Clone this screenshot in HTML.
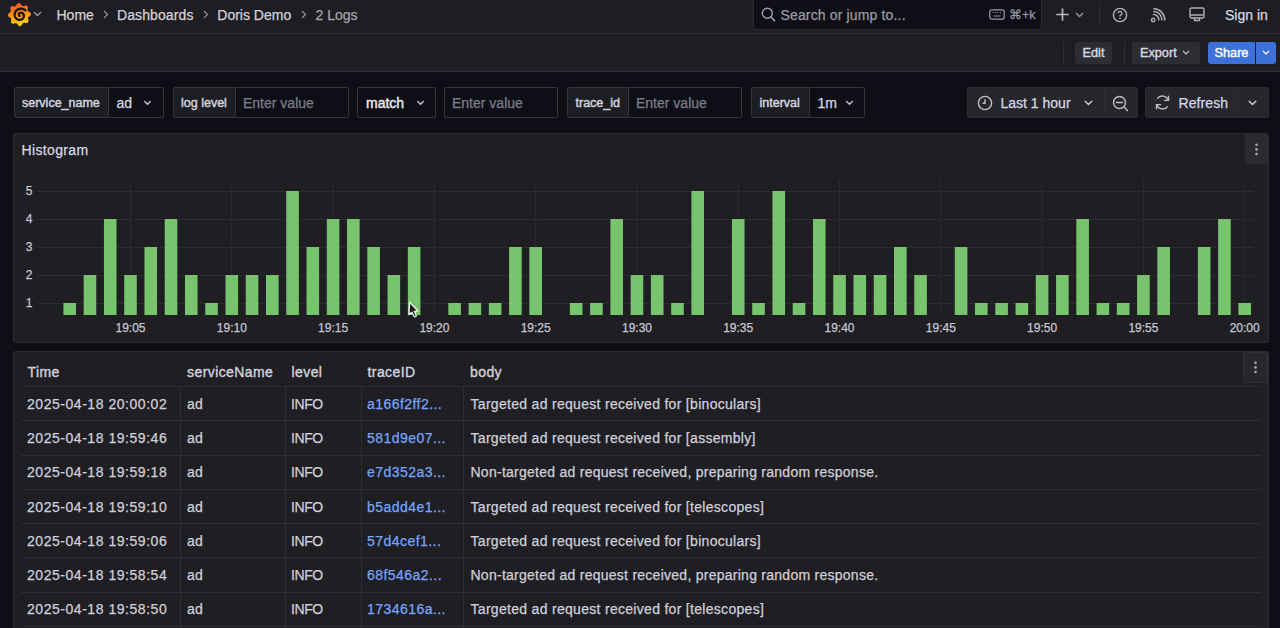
<!DOCTYPE html>
<html><head><meta charset="utf-8">
<style>
*{box-sizing:border-box;margin:0;padding:0}
html,body{width:1280px;height:628px;overflow:hidden;background:#0e0f16;font-family:"Liberation Sans",sans-serif;color:#ccccdc}
div,span{-webkit-text-stroke:0.25px currentColor}
.a{position:absolute;white-space:nowrap}
#top{position:absolute;left:0;top:0;width:1280px;height:34px;background:#1d1d22;border-bottom:1px solid #2e2f35}
#tool{position:absolute;left:0;top:34px;width:1280px;height:38px;background:#1d1d22;border-bottom:1px solid #2e2f35}
.t14{font-size:14px;line-height:16px}
.bc{color:#d2d2dc;font-size:14px;line-height:16px;top:7px}
.btn{position:absolute;top:42px;height:22px;background:#2c2d33;border-radius:3px;font-size:12.7px;line-height:22px;color:#d8d8e2;-webkit-text-stroke:0.4px currentColor}
.lab{position:absolute;top:87px;height:31px;background:#1d1e24;border:1px solid #34353b;border-radius:2px 0 0 2px;font-size:12.5px;font-weight:400;line-height:30px;color:#d4d4de;-webkit-text-stroke:0.45px currentColor}
.inp{position:absolute;top:87px;height:31px;background:#0e0f16;border:1px solid #34353b;border-radius:2px;font-size:14px;line-height:30px;color:#d8d8e2}
.ph{color:#7d7d88}
.panel{position:absolute;left:13px;width:1256px;background:#1e1e23;border:1px solid #2d2e33;border-radius:3px}
.tbtn{position:absolute;top:87px;height:31px;background:#26272d;border:1px solid #2c2d33;border-radius:2px}
.row{left:21px;width:1240px;height:1px;background:#2d2e33}
.vl{top:386px;width:1px;height:260px;background:#2d2e33}
.td{font-size:14px;line-height:16px;color:#d0d0da;letter-spacing:0.29px}
.dt{letter-spacing:0.54px}
.caps{letter-spacing:-0.4px}
.lk{color:#7aa5f5;letter-spacing:0.45px}
.th{font-size:14px;line-height:16px;color:#d0d0da;top:364px;letter-spacing:0.42px;-webkit-text-stroke:0.4px currentColor}
</style></head><body>
<div id="top"></div>
<div id="tool"></div>

<!-- logo -->
<svg class="a" style="left:7px;top:2px" width="25" height="25" viewBox="0 0 25 25">
 <defs><linearGradient id="lg" x1="0" y1="0" x2="0.15" y2="1"><stop offset="0" stop-color="#ee4b2b"/><stop offset="1" stop-color="#fbd20a"/></linearGradient></defs>
 <path d="M23.91 12.60 L23.82 12.82 L23.70 13.04 L23.55 13.26 L23.39 13.46 L23.20 13.66 L23.00 13.85 L22.79 14.04 L22.57 14.21 L22.35 14.38 L22.14 14.54 L21.94 14.69 L21.75 14.84 L21.57 14.99 L21.42 15.14 L21.29 15.30 L21.18 15.45 L21.10 15.62 L21.04 15.79 L21.00 15.97 L20.99 16.16 L21.00 16.36 L21.02 16.57 L21.06 16.80 L21.11 17.04 L21.17 17.29 L21.24 17.55 L21.30 17.82 L21.36 18.09 L21.40 18.36 L21.44 18.64 L21.45 18.91 L21.45 19.17 L21.42 19.43 L21.37 19.67 L21.30 19.90 L21.20 20.11 L21.07 20.30 L20.91 20.47 L20.74 20.62 L20.54 20.74 L20.31 20.83 L20.08 20.90 L19.82 20.95 L19.56 20.98 L19.28 20.99 L19.01 20.98 L18.73 20.96 L18.45 20.93 L18.18 20.90 L17.92 20.86 L17.66 20.82 L17.42 20.80 L17.19 20.78 L16.98 20.78 L16.78 20.79 L16.59 20.83 L16.42 20.88 L16.25 20.96 L16.10 21.06 L15.96 21.19 L15.82 21.34 L15.69 21.51 L15.55 21.70 L15.42 21.90 L15.29 22.12 L15.15 22.35 L15.00 22.58 L14.85 22.81 L14.69 23.04 L14.52 23.26 L14.34 23.46 L14.15 23.65 L13.95 23.81 L13.74 23.95 L13.53 24.06 L13.31 24.13 L13.08 24.18 L12.86 24.19 L12.63 24.16 L12.40 24.11 L12.18 24.02 L11.96 23.90 L11.74 23.75 L11.54 23.59 L11.34 23.40 L11.15 23.20 L10.96 22.99 L10.79 22.77 L10.62 22.55 L10.46 22.34 L10.31 22.14 L10.16 21.95 L10.01 21.77 L9.86 21.62 L9.70 21.49 L9.55 21.38 L9.38 21.30 L9.21 21.24 L9.03 21.20 L8.84 21.19 L8.64 21.20 L8.43 21.22 L8.20 21.26 L7.96 21.31 L7.71 21.37 L7.45 21.44 L7.18 21.50 L6.91 21.56 L6.64 21.60 L6.36 21.64 L6.09 21.65 L5.83 21.65 L5.57 21.62 L5.33 21.57 L5.10 21.50 L4.89 21.40 L4.70 21.27 L4.53 21.11 L4.38 20.94 L4.26 20.74 L4.17 20.51 L4.10 20.28 L4.05 20.02 L4.02 19.76 L4.01 19.48 L4.02 19.21 L4.04 18.93 L4.07 18.65 L4.10 18.38 L4.14 18.12 L4.18 17.86 L4.20 17.62 L4.22 17.39 L4.22 17.18 L4.21 16.98 L4.17 16.79 L4.12 16.62 L4.04 16.45 L3.94 16.30 L3.81 16.16 L3.66 16.02 L3.49 15.89 L3.30 15.75 L3.10 15.62 L2.88 15.49 L2.65 15.35 L2.42 15.20 L2.19 15.05 L1.96 14.89 L1.74 14.72 L1.54 14.54 L1.35 14.35 L1.19 14.15 L1.05 13.94 L0.94 13.73 L0.87 13.51 L0.82 13.28 L0.81 13.06 L0.84 12.83 L0.89 12.60 L0.98 12.38 L1.10 12.16 L1.25 11.94 L1.41 11.74 L1.60 11.54 L1.80 11.35 L2.01 11.16 L2.23 10.99 L2.45 10.82 L2.66 10.66 L2.86 10.51 L3.05 10.36 L3.23 10.21 L3.38 10.06 L3.51 9.90 L3.62 9.75 L3.70 9.58 L3.76 9.41 L3.80 9.23 L3.81 9.04 L3.80 8.84 L3.78 8.63 L3.74 8.40 L3.69 8.16 L3.63 7.91 L3.56 7.65 L3.50 7.38 L3.44 7.11 L3.40 6.84 L3.36 6.56 L3.35 6.29 L3.35 6.03 L3.38 5.77 L3.43 5.53 L3.50 5.30 L3.60 5.09 L3.73 4.90 L3.89 4.73 L4.06 4.58 L4.26 4.46 L4.49 4.37 L4.72 4.30 L4.98 4.25 L5.24 4.22 L5.52 4.21 L5.79 4.22 L6.07 4.24 L6.35 4.27 L6.62 4.30 L6.88 4.34 L7.14 4.38 L7.38 4.40 L7.61 4.42 L7.82 4.42 L8.02 4.41 L8.21 4.37 L8.38 4.32 L8.55 4.24 L8.70 4.14 L8.84 4.01 L8.98 3.86 L9.11 3.69 L9.25 3.50 L9.38 3.30 L9.51 3.08 L9.65 2.85 L9.80 2.62 L9.95 2.39 L10.11 2.16 L10.28 1.94 L10.46 1.74 L10.65 1.55 L10.85 1.39 L11.06 1.25 L11.27 1.14 L11.49 1.07 L11.72 1.02 L11.94 1.01 L12.17 1.04 L12.40 1.09 L12.62 1.18 L12.84 1.30 L13.06 1.45 L13.26 1.61 L13.46 1.80 L13.65 2.00 L13.84 2.21 L14.01 2.43 L14.18 2.65 L14.34 2.86 L14.49 3.06 L14.64 3.25 L14.79 3.43 L14.94 3.58 L15.10 3.71 L15.25 3.82 L15.42 3.90 L15.59 3.96 L15.77 4.00 L15.96 4.01 L16.16 4.00 L16.37 3.98 L16.60 3.94 L16.84 3.89 L17.09 3.83 L17.35 3.76 L17.62 3.70 L17.89 3.64 L18.16 3.60 L18.44 3.56 L18.71 3.55 L18.97 3.55 L19.23 3.58 L19.47 3.63 L19.70 3.70 L19.91 3.80 L20.10 3.93 L20.27 4.09 L20.42 4.26 L20.54 4.46 L20.63 4.69 L20.70 4.92 L20.75 5.18 L20.78 5.44 L20.79 5.72 L20.78 5.99 L20.76 6.27 L20.73 6.55 L20.70 6.82 L20.66 7.08 L20.62 7.34 L20.60 7.58 L20.58 7.81 L20.58 8.02 L20.59 8.22 L20.63 8.41 L20.68 8.58 L20.76 8.75 L20.86 8.90 L20.99 9.04 L21.14 9.18 L21.31 9.31 L21.50 9.45 L21.70 9.58 L21.92 9.71 L22.15 9.85 L22.38 10.00 L22.61 10.15 L22.84 10.31 L23.06 10.48 L23.26 10.66 L23.45 10.85 L23.61 11.05 L23.75 11.26 L23.86 11.47 L23.93 11.69 L23.98 11.92 L23.99 12.14 L23.96 12.37Z" fill="url(#lg)"/>
 <path d="M12.66 13.93 L12.59 13.92 L12.52 13.90 L12.45 13.87 L12.38 13.84 L12.31 13.80 L12.24 13.75 L12.18 13.70 L12.12 13.64 L12.06 13.57 L12.00 13.50 L11.95 13.42 L11.90 13.34 L11.86 13.25 L11.83 13.16 L11.80 13.06 L11.78 12.95 L11.76 12.85 L11.76 12.74 L11.76 12.62 L11.76 12.51 L11.78 12.39 L11.81 12.28 L11.84 12.16 L11.89 12.04 L11.94 11.93 L12.00 11.81 L12.07 11.70 L12.15 11.59 L12.24 11.49 L12.34 11.39 L12.44 11.29 L12.56 11.21 L12.68 11.12 L12.81 11.05 L12.94 10.98 L13.08 10.92 L13.23 10.87 L13.39 10.83 L13.55 10.80 L13.71 10.78 L13.88 10.77 L14.05 10.77 L14.22 10.78 L14.39 10.81 L14.56 10.85 L14.74 10.89 L14.91 10.95 L15.08 11.03 L15.24 11.11 L15.41 11.21 L15.56 11.32 L15.72 11.44 L15.86 11.57 L16.00 11.72 L16.13 11.87 L16.26 12.03 L16.37 12.21 L16.47 12.39 L16.56 12.58 L16.64 12.78 L16.71 12.99 L16.76 13.20 L16.80 13.42 L16.83 13.65 L16.84 13.87 L16.84 14.10 L16.82 14.34 L16.79 14.57 L16.74 14.80 L16.67 15.03 L16.59 15.26 L16.50 15.49 L16.39 15.71 L16.26 15.93 L16.12 16.14 L15.96 16.34 L15.79 16.54 L15.61 16.72 L15.41 16.89 L15.20 17.06 L14.97 17.21 L14.74 17.34 L14.49 17.46 L14.24 17.57 L13.97 17.66 L13.70 17.74 L13.42 17.79 L13.14 17.83 L12.85 17.86 L12.56 17.86 L12.27 17.85 L11.97 17.81 L11.68 17.76 L11.38 17.68 L11.09 17.59 L10.81 17.48 L10.53 17.35 L10.25 17.20 L9.98 17.03 L9.73 16.85 L9.48 16.64 L9.25 16.42 L9.02 16.18 L8.82 15.93 L8.62 15.66 L8.45 15.38 L8.29 15.08 L8.14 14.78 L8.02 14.46 L7.92 14.13 L7.83 13.80 L7.77 13.45 L7.73 13.10 L7.71 12.75 L7.72 12.39 L7.75 12.04 L7.80 11.68 L7.87 11.32 L7.97 10.97 L8.09 10.62 L8.23 10.28 L8.40 9.94 L8.59 9.61 L8.80 9.30 L9.03 8.99 L9.28 8.70 L9.55 8.43 L9.84 8.17 L10.15 7.92 L10.47 7.70 L10.81 7.50 L11.17 7.31 L11.54 7.15 L11.92 7.01 L12.31 6.90 L12.71 6.81 L13.12 6.74 L13.53 6.70 L13.95 6.69 L14.37 6.70 L14.79 6.74 L15.21 6.81 L15.63 6.90 L16.05 7.02 L16.45 7.17 L16.85 7.34 L17.24 7.55 L17.62 7.77 L17.99 8.02 L18.34 8.30" fill="none" stroke="#241512" stroke-width="2.4" stroke-linecap="round"/>
</svg>
<svg class="a" style="left:33px;top:11px" width="9" height="6" viewBox="0 0 9 6"><path d="M1 1l3.5 3.5L8 1" fill="none" stroke="#9a9aa5" stroke-width="1.3"/></svg>

<div class="a bc" style="left:56.5px">Home</div>
<svg class="a" style="left:103px;top:10px" width="6" height="9" viewBox="0 0 6 9"><path d="M1 1l3.5 3.5L1 8" fill="none" stroke="#8e8e99" stroke-width="1.3"/></svg>
<div class="a bc" style="left:117px;letter-spacing:0.1px">Dashboards</div>
<svg class="a" style="left:203px;top:10px" width="6" height="9" viewBox="0 0 6 9"><path d="M1 1l3.5 3.5L1 8" fill="none" stroke="#8e8e99" stroke-width="1.3"/></svg>
<div class="a bc" style="left:217.3px">Doris Demo</div>
<svg class="a" style="left:301px;top:10px" width="6" height="9" viewBox="0 0 6 9"><path d="M1 1l3.5 3.5L1 8" fill="none" stroke="#8e8e99" stroke-width="1.3"/></svg>
<div class="a bc" style="left:315.5px;color:#a4a4ae">2 Logs</div>

<!-- search -->
<div class="a" style="left:753px;top:-4px;width:289px;height:34px;background:#0e0f16;border:1px solid #2a2b32;border-radius:3px"></div>
<svg class="a" style="left:761px;top:7px" width="15" height="15" viewBox="0 0 15 15"><circle cx="6.3" cy="6.3" r="5" fill="none" stroke="#a0a0aa" stroke-width="1.4"/><path d="M10 10l3.6 3.6" stroke="#a0a0aa" stroke-width="1.5" stroke-linecap="round"/></svg>
<div class="a t14" style="left:780.5px;top:7px;color:#9a9aa4;letter-spacing:0.15px">Search or jump to...</div>
<svg class="a" style="left:989px;top:9px" width="16" height="11" viewBox="0 0 16 11"><rect x="0.8" y="0.8" width="14.4" height="9.4" rx="2" fill="none" stroke="#9a9aa4" stroke-width="1.2"/><path d="M3.5 3.5h1M6 3.5h1M8.5 3.5h1M11 3.5h1M4.5 7h7" stroke="#9a9aa4" stroke-width="1.1"/></svg>
<div class="a" style="left:1009px;top:8px;font-size:12.5px;line-height:14px;color:#9a9aa4">⌘+k</div>

<svg class="a" style="left:1056px;top:8px" width="13" height="13" viewBox="0 0 13 13"><path d="M6.5 1v11M1 6.5h11" stroke="#b8b8c2" stroke-width="1.7" stroke-linecap="round"/></svg>
<svg class="a" style="left:1075px;top:12px" width="9" height="6" viewBox="0 0 9 6"><path d="M1 1l3.5 3.5L8 1" fill="none" stroke="#9a9aa5" stroke-width="1.3"/></svg>
<div class="a" style="left:1099px;top:4px;width:1px;height:21px;background:#2c2d33"></div>
<svg class="a" style="left:1112px;top:7px" width="16" height="16" viewBox="0 0 16 16"><circle cx="8" cy="8" r="6.6" fill="none" stroke="#b0b0ba" stroke-width="1.4"/><path d="M6 6.3a2 2 0 1 1 2.6 1.9c-.5.2-.6.5-.6 1v.4" fill="none" stroke="#b0b0ba" stroke-width="1.3"/><circle cx="8" cy="11.4" r="0.8" fill="#b0b0ba"/></svg>
<svg class="a" style="left:1150px;top:8px" width="16" height="15" viewBox="0 0 16 15"><circle cx="3.2" cy="12" r="1.7" fill="none" stroke="#b0b0ba" stroke-width="1.4"/><path d="M3.5 6.6a5.2 5.2 0 0 1 5.3 5.3M3.8 3.6a8.3 8.3 0 0 1 8.1 8.3M4 0.8a11.2 11.2 0 0 1 10.8 11.2" fill="none" stroke="#b0b0ba" stroke-width="1.5" stroke-linecap="round"/></svg>
<svg class="a" style="left:1189px;top:7px" width="16" height="16" viewBox="0 0 16 16"><rect x="1" y="1" width="14" height="10" rx="1.5" fill="none" stroke="#b0b0ba" stroke-width="1.4"/><path d="M1.5 8h13M5.5 11v2.5h5V11" fill="none" stroke="#b0b0ba" stroke-width="1.4"/></svg>
<div class="a t14" style="left:1225px;top:7px;color:#d8d8e2">Sign in</div>

<!-- toolbar -->
<div class="a" style="left:1063px;top:41px;width:1px;height:23px;background:#2c2d33"></div>
<div class="btn" style="left:1075px;width:37px;text-align:center">Edit</div>
<div class="a" style="left:1124px;top:41px;width:1px;height:23px;background:#2c2d33"></div>
<div class="btn" style="left:1132px;width:68px;padding-left:8px">Export</div>
<svg class="a" style="left:1182px;top:50px" width="8" height="5" viewBox="0 0 8 5"><path d="M1 1l3 3 3-3" fill="none" stroke="#c0c0ca" stroke-width="1.2"/></svg>
<div class="btn" style="left:1208px;width:47px;background:#3d71d9;color:#fff;text-align:center;border-radius:3px 0 0 3px">Share</div>
<div class="btn" style="left:1256px;width:20px;background:#3d71d9;border-radius:0 3px 3px 0"></div>
<svg class="a" style="left:1262px;top:50px" width="8" height="5" viewBox="0 0 8 5"><path d="M1 1l3 3 3-3" fill="none" stroke="#fff" stroke-width="1.2"/></svg>

<!-- filters -->
<div class="lab" style="left:13.5px;width:95px;padding-left:7.5px">service_name</div>
<div class="inp" style="left:107.5px;width:56px;padding-left:8px">ad</div>
<svg class="a" style="left:143px;top:100px" width="9" height="6" viewBox="0 0 9 6"><path d="M1.7 1.5l2.8 2.8 2.8-2.8" fill="none" stroke="#c4c4ce" stroke-width="1.4" stroke-linecap="round"/></svg>

<div class="lab" style="left:172.5px;width:64px;padding-left:7.5px">log level</div>
<div class="inp" style="left:235px;width:114px;padding-left:7px"><span class="ph">Enter value</span></div>

<div class="inp" style="left:357px;width:79px;padding-left:8px;font-weight:400;color:#e8e8f0;font-size:14px;-webkit-text-stroke:0.45px currentColor">match</div>
<svg class="a" style="left:415.5px;top:100px" width="9" height="6" viewBox="0 0 9 6"><path d="M1.7 1.5l2.8 2.8 2.8-2.8" fill="none" stroke="#c4c4ce" stroke-width="1.4" stroke-linecap="round"/></svg>

<div class="inp" style="left:444px;width:114px;padding-left:7px"><span class="ph">Enter value</span></div>

<div class="lab" style="left:567px;width:62px;padding-left:7.5px">trace_id</div>
<div class="inp" style="left:628px;width:113.5px;padding-left:7px"><span class="ph">Enter value</span></div>

<div class="lab" style="left:750.5px;width:59px;padding-left:8px">interval</div>
<div class="inp" style="left:808.5px;width:56.5px;padding-left:8px">1m</div>
<svg class="a" style="left:845px;top:100px" width="9" height="6" viewBox="0 0 9 6"><path d="M1.7 1.5l2.8 2.8 2.8-2.8" fill="none" stroke="#c4c4ce" stroke-width="1.4" stroke-linecap="round"/></svg>

<!-- time picker -->
<div class="tbtn" style="left:967px;width:171px"></div>
<div class="a" style="left:1104px;top:88px;width:1px;height:29px;background:#2c2d33"></div>
<svg class="a" style="left:976.5px;top:94.5px" width="16" height="16" viewBox="0 0 16 16"><circle cx="8" cy="8" r="6.6" fill="none" stroke="#c0c0ca" stroke-width="1.4"/><path d="M8 4.2V8.3H5.5" fill="none" stroke="#c0c0ca" stroke-width="1.4"/></svg>
<div class="a t14" style="left:1000.5px;top:95px;color:#d8d8e2">Last 1 hour</div>
<svg class="a" style="left:1084px;top:100px" width="9" height="6" viewBox="0 0 9 6"><path d="M1.2 1.2l3.3 3.3 3.3-3.3" fill="none" stroke="#c8c8d2" stroke-width="1.5" stroke-linecap="round"/></svg>
<svg class="a" style="left:1112px;top:94.5px" width="17" height="17" viewBox="0 0 17 17"><circle cx="7.5" cy="7.5" r="6" fill="none" stroke="#c0c0ca" stroke-width="1.4"/><path d="M4.5 7.5h6M12 12l3.5 3.5" stroke="#c0c0ca" stroke-width="1.4" stroke-linecap="round"/></svg>

<div class="tbtn" style="left:1145px;width:124px"></div>
<div class="a" style="left:1237px;top:88px;width:1px;height:29px;background:#2c2d33"></div>
<svg class="a" style="left:1154px;top:94px" width="17" height="17" viewBox="0 0 17 17"><path d="M14.2 6.2A6.2 6.2 0 0 0 3.3 4.6M2.8 10.8a6.2 6.2 0 0 0 10.9 1.6" fill="none" stroke="#c0c0ca" stroke-width="1.4"/><path d="M14.5 1.8v4.6H9.9M2.5 15.2v-4.6h4.6" fill="none" stroke="#c0c0ca" stroke-width="1.4"/></svg>
<div class="a t14" style="left:1178.5px;top:95px;color:#d8d8e2;letter-spacing:0.1px">Refresh</div>
<svg class="a" style="left:1248px;top:100px" width="9" height="6" viewBox="0 0 9 6"><path d="M1.2 1.2l3.3 3.3 3.3-3.3" fill="none" stroke="#c8c8d2" stroke-width="1.5" stroke-linecap="round"/></svg>

<!-- histogram panel -->
<div class="panel" style="top:133px;height:210px"></div>
<div class="a" style="left:21.5px;top:142px;font-size:14px;line-height:16px;color:#d8d8e2;letter-spacing:0.35px">Histogram</div>
<div class="a" style="left:1245px;top:134px;width:23px;height:30px;background:#2a2b31;border-radius:0 2px 2px 2px"></div>
<svg class="a" style="left:1253px;top:142px" width="7" height="15" viewBox="0 0 7 15"><circle cx="3.5" cy="2.8" r="1.3" fill="#a8a8b2"/><circle cx="3.5" cy="7.4" r="1.3" fill="#a8a8b2"/><circle cx="3.5" cy="12" r="1.3" fill="#a8a8b2"/></svg>
<svg class="a" style="left:0;top:0" width="1280" height="628" viewBox="0 0 1280 628"><line x1="37" y1="303.5" x2="1253" y2="303.5" stroke="#2b2c31" stroke-width="1"/><line x1="37" y1="275.5" x2="1253" y2="275.5" stroke="#2b2c31" stroke-width="1"/><line x1="37" y1="247.5" x2="1253" y2="247.5" stroke="#2b2c31" stroke-width="1"/><line x1="37" y1="219.5" x2="1253" y2="219.5" stroke="#2b2c31" stroke-width="1"/><line x1="37" y1="191.5" x2="1253" y2="191.5" stroke="#2b2c31" stroke-width="1"/><line x1="130.5" y1="180" x2="130.5" y2="315" stroke="#2b2c31" stroke-width="1"/><line x1="231.8" y1="180" x2="231.8" y2="315" stroke="#2b2c31" stroke-width="1"/><line x1="333.1" y1="180" x2="333.1" y2="315" stroke="#2b2c31" stroke-width="1"/><line x1="434.4" y1="180" x2="434.4" y2="315" stroke="#2b2c31" stroke-width="1"/><line x1="535.7" y1="180" x2="535.7" y2="315" stroke="#2b2c31" stroke-width="1"/><line x1="637.0" y1="180" x2="637.0" y2="315" stroke="#2b2c31" stroke-width="1"/><line x1="738.2" y1="180" x2="738.2" y2="315" stroke="#2b2c31" stroke-width="1"/><line x1="839.5" y1="180" x2="839.5" y2="315" stroke="#2b2c31" stroke-width="1"/><line x1="940.8" y1="180" x2="940.8" y2="315" stroke="#2b2c31" stroke-width="1"/><line x1="1042.1" y1="180" x2="1042.1" y2="315" stroke="#2b2c31" stroke-width="1"/><line x1="1143.4" y1="180" x2="1143.4" y2="315" stroke="#2b2c31" stroke-width="1"/><line x1="1244.7" y1="180" x2="1244.7" y2="315" stroke="#2b2c31" stroke-width="1"/><rect x="63.43" y="303" width="12.6" height="12" fill="#78c46e"/><rect x="83.68" y="275" width="12.6" height="40" fill="#78c46e"/><rect x="103.94" y="219" width="12.6" height="96" fill="#78c46e"/><rect x="124.20" y="275" width="12.6" height="40" fill="#78c46e"/><rect x="144.46" y="247" width="12.6" height="68" fill="#78c46e"/><rect x="164.72" y="219" width="12.6" height="96" fill="#78c46e"/><rect x="184.97" y="275" width="12.6" height="40" fill="#78c46e"/><rect x="205.23" y="303" width="12.6" height="12" fill="#78c46e"/><rect x="225.49" y="275" width="12.6" height="40" fill="#78c46e"/><rect x="245.75" y="275" width="12.6" height="40" fill="#78c46e"/><rect x="266.01" y="275" width="12.6" height="40" fill="#78c46e"/><rect x="286.26" y="191" width="12.6" height="124" fill="#78c46e"/><rect x="306.52" y="247" width="12.6" height="68" fill="#78c46e"/><rect x="326.78" y="219" width="12.6" height="96" fill="#78c46e"/><rect x="347.04" y="219" width="12.6" height="96" fill="#78c46e"/><rect x="367.30" y="247" width="12.6" height="68" fill="#78c46e"/><rect x="387.55" y="275" width="12.6" height="40" fill="#78c46e"/><rect x="407.81" y="247" width="12.6" height="68" fill="#78c46e"/><rect x="448.33" y="303" width="12.6" height="12" fill="#78c46e"/><rect x="468.59" y="303" width="12.6" height="12" fill="#78c46e"/><rect x="488.84" y="303" width="12.6" height="12" fill="#78c46e"/><rect x="509.10" y="247" width="12.6" height="68" fill="#78c46e"/><rect x="529.36" y="247" width="12.6" height="68" fill="#78c46e"/><rect x="569.88" y="303" width="12.6" height="12" fill="#78c46e"/><rect x="590.13" y="303" width="12.6" height="12" fill="#78c46e"/><rect x="610.39" y="219" width="12.6" height="96" fill="#78c46e"/><rect x="630.65" y="275" width="12.6" height="40" fill="#78c46e"/><rect x="650.91" y="275" width="12.6" height="40" fill="#78c46e"/><rect x="671.17" y="303" width="12.6" height="12" fill="#78c46e"/><rect x="691.42" y="191" width="12.6" height="124" fill="#78c46e"/><rect x="731.94" y="219" width="12.6" height="96" fill="#78c46e"/><rect x="752.20" y="303" width="12.6" height="12" fill="#78c46e"/><rect x="772.46" y="191" width="12.6" height="124" fill="#78c46e"/><rect x="792.71" y="303" width="12.6" height="12" fill="#78c46e"/><rect x="812.97" y="219" width="12.6" height="96" fill="#78c46e"/><rect x="833.23" y="275" width="12.6" height="40" fill="#78c46e"/><rect x="853.49" y="275" width="12.6" height="40" fill="#78c46e"/><rect x="873.75" y="275" width="12.6" height="40" fill="#78c46e"/><rect x="894.00" y="247" width="12.6" height="68" fill="#78c46e"/><rect x="914.26" y="275" width="12.6" height="40" fill="#78c46e"/><rect x="954.78" y="247" width="12.6" height="68" fill="#78c46e"/><rect x="975.04" y="303" width="12.6" height="12" fill="#78c46e"/><rect x="995.29" y="303" width="12.6" height="12" fill="#78c46e"/><rect x="1015.55" y="303" width="12.6" height="12" fill="#78c46e"/><rect x="1035.81" y="275" width="12.6" height="40" fill="#78c46e"/><rect x="1056.07" y="275" width="12.6" height="40" fill="#78c46e"/><rect x="1076.33" y="219" width="12.6" height="96" fill="#78c46e"/><rect x="1096.58" y="303" width="12.6" height="12" fill="#78c46e"/><rect x="1116.84" y="303" width="12.6" height="12" fill="#78c46e"/><rect x="1137.10" y="275" width="12.6" height="40" fill="#78c46e"/><rect x="1157.36" y="247" width="12.6" height="68" fill="#78c46e"/><rect x="1197.87" y="247" width="12.6" height="68" fill="#78c46e"/><rect x="1218.13" y="219" width="12.6" height="96" fill="#78c46e"/><rect x="1238.39" y="303" width="12.6" height="12" fill="#78c46e"/><g fill="#c8c8d2" stroke="#c8c8d2" stroke-width="0.25" font-size="12" font-family="Liberation Sans"><text x="130.5" y="331.5" text-anchor="middle">19:05</text><text x="231.8" y="331.5" text-anchor="middle">19:10</text><text x="333.1" y="331.5" text-anchor="middle">19:15</text><text x="434.4" y="331.5" text-anchor="middle">19:20</text><text x="535.7" y="331.5" text-anchor="middle">19:25</text><text x="637.0" y="331.5" text-anchor="middle">19:30</text><text x="738.2" y="331.5" text-anchor="middle">19:35</text><text x="839.5" y="331.5" text-anchor="middle">19:40</text><text x="940.8" y="331.5" text-anchor="middle">19:45</text><text x="1042.1" y="331.5" text-anchor="middle">19:50</text><text x="1143.4" y="331.5" text-anchor="middle">19:55</text><text x="1244.7" y="331.5" text-anchor="middle">20:00</text><text x="29" y="306.7" text-anchor="middle">1</text><text x="29" y="278.7" text-anchor="middle">2</text><text x="29" y="250.7" text-anchor="middle">3</text><text x="29" y="222.7" text-anchor="middle">4</text><text x="29" y="194.7" text-anchor="middle">5</text></g></svg>
<svg class="a" style="left:407px;top:299.5px" width="16" height="21" viewBox="0 0 16 21"><path d="M2.6 2.2 L2.0 14.6 L4.9 12.2 L7.4 17.0 L9.4 16.0 L7.2 11.3 L11.0 11.0 Z" fill="#111" stroke="#f0f0f0" stroke-width="1.3" stroke-linejoin="round"/></svg>

<!-- table panel -->
<div class="panel" style="top:351px;height:300px"></div>
<div class="a th" style="left:27.5px">Time</div>
<div class="a th" style="left:187px">serviceName</div>
<div class="a th" style="left:291.5px">level</div>
<div class="a th" style="left:367.5px">traceID</div>
<div class="a th" style="left:470px">body</div>
<div class="a" style="left:1243px;top:352px;width:25px;height:31px;background:#26272c;border:1px solid #303137;border-radius:2px"></div>
<svg class="a" style="left:1252px;top:360px" width="7" height="15" viewBox="0 0 7 15"><circle cx="3.5" cy="2.8" r="1.3" fill="#a8a8b2"/><circle cx="3.5" cy="7.4" r="1.3" fill="#a8a8b2"/><circle cx="3.5" cy="12" r="1.3" fill="#a8a8b2"/></svg>
<div class="a row" style="top:386.0px"></div><div class="a td dt" style="left:27px;top:395.7px">2025-04-18 20:00:02</div><div class="a td" style="left:187px;top:395.7px">ad</div><div class="a td caps" style="left:291px;top:395.7px">INFO</div><div class="a td lk" style="left:367px;top:395.7px">a166f2ff2...</div><div class="a td" style="left:470.5px;top:395.7px;letter-spacing:0.3px">Targeted ad request received for [binoculars]</div><div class="a row" style="top:420.2px"></div><div class="a td dt" style="left:27px;top:430.0px">2025-04-18 19:59:46</div><div class="a td" style="left:187px;top:430.0px">ad</div><div class="a td caps" style="left:291px;top:430.0px">INFO</div><div class="a td lk" style="left:367px;top:430.0px">581d9e07...</div><div class="a td" style="left:470.5px;top:430.0px;letter-spacing:0.3px">Targeted ad request received for [assembly]</div><div class="a row" style="top:454.5px"></div><div class="a td dt" style="left:27px;top:464.2px">2025-04-18 19:59:18</div><div class="a td" style="left:187px;top:464.2px">ad</div><div class="a td caps" style="left:291px;top:464.2px">INFO</div><div class="a td lk" style="left:367px;top:464.2px">e7d352a3...</div><div class="a td" style="left:470.5px;top:464.2px;letter-spacing:0.26px">Non-targeted ad request received, preparing random response.</div><div class="a row" style="top:488.8px"></div><div class="a td dt" style="left:27px;top:498.5px">2025-04-18 19:59:10</div><div class="a td" style="left:187px;top:498.5px">ad</div><div class="a td caps" style="left:291px;top:498.5px">INFO</div><div class="a td lk" style="left:367px;top:498.5px">b5add4e1...</div><div class="a td" style="left:470.5px;top:498.5px;letter-spacing:0.3px">Targeted ad request received for [telescopes]</div><div class="a row" style="top:523.0px"></div><div class="a td dt" style="left:27px;top:532.7px">2025-04-18 19:59:06</div><div class="a td" style="left:187px;top:532.7px">ad</div><div class="a td caps" style="left:291px;top:532.7px">INFO</div><div class="a td lk" style="left:367px;top:532.7px">57d4cef1...</div><div class="a td" style="left:470.5px;top:532.7px;letter-spacing:0.3px">Targeted ad request received for [binoculars]</div><div class="a row" style="top:557.2px"></div><div class="a td dt" style="left:27px;top:567.0px">2025-04-18 19:58:54</div><div class="a td" style="left:187px;top:567.0px">ad</div><div class="a td caps" style="left:291px;top:567.0px">INFO</div><div class="a td lk" style="left:367px;top:567.0px">68f546a2...</div><div class="a td" style="left:470.5px;top:567.0px;letter-spacing:0.26px">Non-targeted ad request received, preparing random response.</div><div class="a row" style="top:591.5px"></div><div class="a td dt" style="left:27px;top:601.2px">2025-04-18 19:58:50</div><div class="a td" style="left:187px;top:601.2px">ad</div><div class="a td caps" style="left:291px;top:601.2px">INFO</div><div class="a td lk" style="left:367px;top:601.2px">1734616a...</div><div class="a td" style="left:470.5px;top:601.2px;letter-spacing:0.3px">Targeted ad request received for [telescopes]</div><div class="a row" style="top:625.8px"></div><div class="a vl" style="left:180px"></div><div class="a vl" style="left:285px"></div><div class="a vl" style="left:361px"></div><div class="a vl" style="left:463px"></div>
</body></html>
